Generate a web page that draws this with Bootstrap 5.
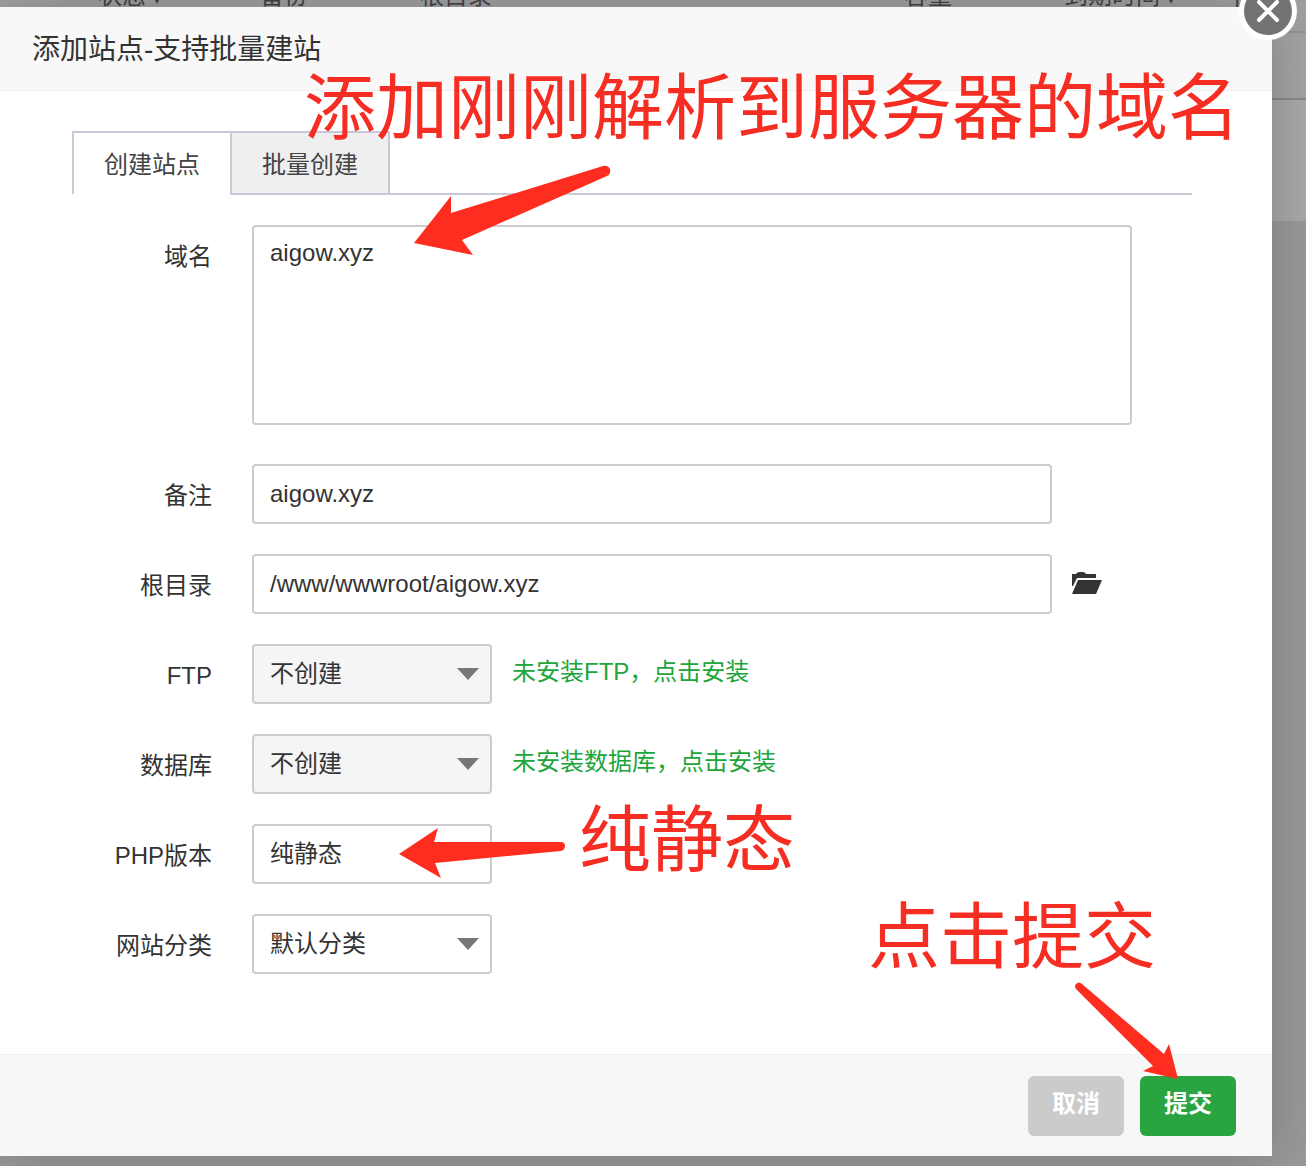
<!DOCTYPE html>
<html lang="zh-CN">
<head>
<meta charset="utf-8">
<meta name="viewport" content="width=device-width, initial-scale=1">
<title>添加站点</title>
<link href="https://cdn.jsdelivr.net/npm/bootstrap@5.3.0/dist/css/bootstrap.min.css" rel="stylesheet">
<style>
  body { font-family: "Liberation Sans", "Noto Sans CJK SC", sans-serif; font-size: 24px; line-height: 36px; color: #333; background: #999; }
  .stage { min-height: 100vh; padding: 7px 34px 10px 0; }

  /* dimmed site list behind the dialog */
  .site-list { inset: -22px 0 0 0; color: #444; }
  .list-head { display: grid; grid-template-columns: 162px 160px 484px 160px 170px 1fr; height: 55px; padding-left: 98px; background: #a0a0a0; border-bottom: 2px solid #939393; }
  .list-row { height: 67px; background: #a3a3a3; border-bottom: 2px solid #888; }
  .list-row-tall { height: 121px; background: #a8a8a8; }
  .sort { font-size: 12px; margin-left: 8px; }

  .site-dialog { background: #fff; box-shadow: 1px 1px 50px rgba(0,0,0,.2); }
  .dialog-top { padding: 21px 32px 18px; background: #f8f8f8; border-bottom: 1px solid #eee; }
  .dialog-top h1 { font-size: 28px; line-height: 44px; font-weight: 400; }
  .dialog-main { padding: 40px 80px 80px 72px; }
  .dialog-foot { padding: 21px 36px 20px; background: #f6f8f8; border-top: 1px solid #edf1f2; }

  .close-round { top: -24px; right: -25px; width: 58px; height: 58px; }

  .site-tabs { border-bottom: 2px solid #c8c8d6; }
  .site-tabs .tab { width: 160px; height: 64px; padding: 4px 0 0; margin-bottom: -2px; border: 2px solid #c8c8d6; border-radius: 0; background: #efeff0; color: #444; }
  .site-tabs .tab.active { width: 158px; border-right: 0; border-bottom-color: #fff; background: #fff; }

  .site-form { gap: 30px; padding-top: 30px; }
  .form-line { gap: 40px; }
  .form-line > label { flex: 0 0 140px; text-align: right; line-height: 60px; padding-top: 2px; margin-bottom: -2px; }
  .field { flex: 0 1 800px; min-width: 0; height: 60px; padding: 0 16px; border: 2px solid #ccc; border-radius: 4px; font-size: 24px; line-height: 36px; color: #333; background-color: #fff; }
  .field-area { flex-basis: 880px; height: 200px; padding: 8px 16px; margin-bottom: 9px; resize: none; }
  .field-pick { flex-basis: 240px; appearance: none; }
  .field-caret { background-repeat: no-repeat; background-position: right 11px top 22px; background-size: 22px 12px;
    background-image: url("data:image/svg+xml,%3Csvg xmlns='http://www.w3.org/2000/svg' viewBox='0 0 22 12'%3E%3Cpath d='M0 0h22L11 12z' fill='%23777'/%3E%3C/svg%3E"); }
  .field-pick:disabled { background-color: #f5f5f5; opacity: 1; color: #333; }
  .line-body { gap: 20px; }
  .install { color: #20a53a; line-height: 56px; }
  .folder { width: 32px; height: 60px; }

  .act { width: 96px; height: 60px; padding: 0 0 4px; border: 0; border-radius: 6px; font-size: 24px; font-weight: 700; color: #fff; background: #cbcbcb; }
  .act-go { background: #2aa440; }

  /* hand-made notes lying over the dialog */
  .note { color: #f52d22; font-size: 72px; line-height: 88px; white-space: nowrap; pointer-events: none; }
  .note-domain { left: 304px; top: 64px; }
  .note-static { left: 579px; top: 796px; }
  .note-submit { left: 868px; top: 893px; }
  .arrows { left: 0; top: 0; width: 1306px; height: 1156px; pointer-events: none; }
</style>
</head>
<body>
<div class="stage position-relative overflow-hidden">
  <div class="site-list position-absolute" aria-hidden="true">
    <div class="list-head"><span>状态<span class="sort">▾</span></span><span>备份</span><span>根目录</span><span>容量</span><span>到期时间<span class="sort">▾</span></span><span>|</span></div>
    <div class="list-row"></div>
    <div class="list-row-tall"></div>
  </div>

  <main class="site-dialog position-relative">
    <header class="dialog-top"><h1 class="m-0">添加站点-支持批量建站</h1></header>

    <div class="dialog-main">
      <div class="site-tabs d-flex" role="tablist">
        <button class="tab active" type="button" role="tab" aria-selected="true">创建站点</button>
        <button class="tab" type="button" role="tab" aria-selected="false">批量创建</button>
      </div>

      <form id="site" class="site-form d-flex flex-column">
        <div class="form-line d-flex">
          <label for="domain">域名</label>
          <textarea id="domain" class="field field-area">aigow.xyz</textarea>
        </div>
        <div class="form-line d-flex">
          <label for="note">备注</label>
          <input id="note" class="field" type="text" value="aigow.xyz">
        </div>
        <div class="form-line d-flex">
          <label for="root">根目录</label>
          <div class="line-body d-flex flex-fill">
            <input id="root" class="field" type="text" value="/www/wwwroot/aigow.xyz">
            <svg class="folder flex-shrink-0" viewBox="0 0 32 60" fill="#333" aria-hidden="true"><path d="M0 32V20h4q1-2 4-2h3q2 0 3 2h10v4H5L1 32zM6 26h24l-6 14H0z"/></svg>
          </div>
        </div>
        <div class="form-line d-flex">
          <label for="ftp">FTP</label>
          <div class="line-body d-flex flex-fill">
            <select id="ftp" class="field field-pick field-caret" disabled><option>不创建</option></select>
            <a class="install text-decoration-none" href="#">未安装FTP，点击安装</a>
          </div>
        </div>
        <div class="form-line d-flex">
          <label for="db">数据库</label>
          <div class="line-body d-flex flex-fill">
            <select id="db" class="field field-pick field-caret" disabled><option>不创建</option></select>
            <a class="install text-decoration-none" href="#">未安装数据库，点击安装</a>
          </div>
        </div>
        <div class="form-line d-flex">
          <label for="php">PHP版本</label>
          <select id="php" class="field field-pick"><option>纯静态</option></select>
        </div>
        <div class="form-line d-flex">
          <label for="kind">网站分类</label>
          <select id="kind" class="field field-pick field-caret"><option>默认分类</option></select>
        </div>
      </form>
    </div>

    <footer class="dialog-foot d-flex justify-content-end gap-3">
      <button class="act" type="button">取消</button>
      <button class="act act-go" type="submit" form="site">提交</button>
    </footer>

    <button class="close-round position-absolute p-0 border-0 bg-transparent" type="button" aria-label="关闭">
      <svg class="d-block" width="58" height="58" viewBox="0 0 58 58" aria-hidden="true"><circle cx="29" cy="28" r="26.500" fill="#737373" stroke="#fff" stroke-width="5"/><path d="M20 19l18 18M38 19L20 37" stroke="#fff" stroke-width="4" stroke-linecap="round"/></svg>
    </button>
  </main>

  <div class="note note-domain position-absolute">添加刚刚解析到服务器的域名</div>
  <div class="note note-static position-absolute">纯静态</div>
  <div class="note note-submit position-absolute">点击提交</div>
  <svg class="arrows position-absolute" viewBox="0 0 1306 1156" fill="#ff2d20" aria-hidden="true">
    <path d="M414 243L451 196V213L603 166Q608 165 610 169Q611 174 607 176L462 240L473 255z"/>
    <path d="M399 854L438 828L434 842H561Q565 842 565 846Q565 850 561 851L435 863L441 878z"/>
    <path d="M1178 1079L1143 1071L1153 1066L1076 989Q1074 986 1076 984Q1079 981 1082 984L1164 1054L1169 1044z"/>
  </svg>
</div>
<script src="https://cdn.jsdelivr.net/npm/bootstrap@5.3.0/dist/js/bootstrap.bundle.min.js"></script>
</body>
</html>
